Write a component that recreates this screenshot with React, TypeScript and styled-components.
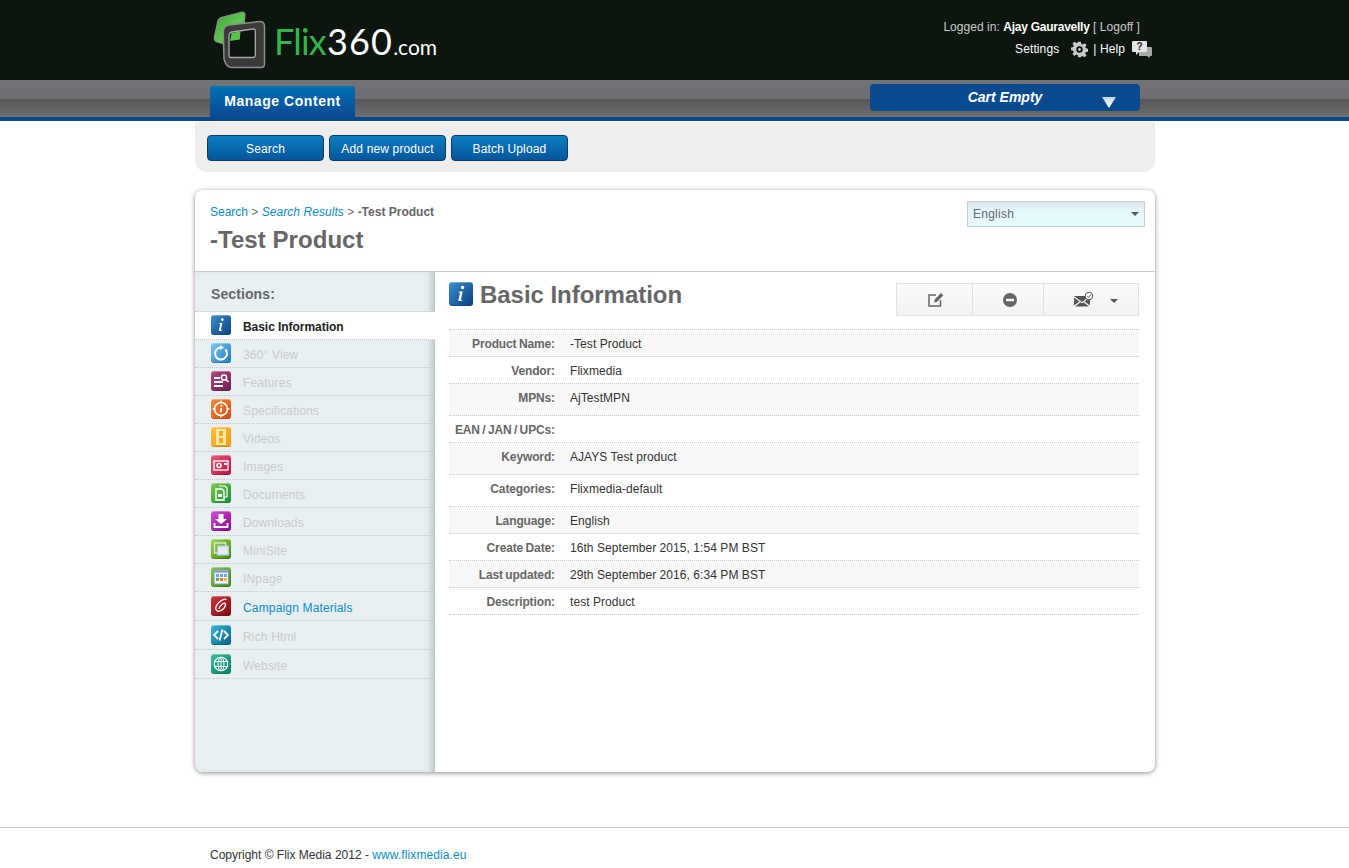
import React from "react";
import styled, { createGlobalStyle } from "styled-components";

const Global = createGlobalStyle`
  html, body { margin: 0; padding: 0; background: #fff; }
  body { font: 12px/14px "Liberation Sans", Arial, sans-serif; color: #333; overflow: hidden; }
  a { text-decoration: none; color: #0a8cc9; }
`;

const Page = styled.div`
  width: 1349px;
  height: 868px;
  overflow: hidden;
`;
const Inner = styled.div`
  width: 960px;
  margin-left: 195px;
`;
const TopBar = styled.header`
  height: 80px;
  background: #0c150e;
`;
const TopInner = styled(Inner)`
  display: flex;
  justify-content: space-between;
  height: 80px;
`;
const Logo = styled.div`
  display: flex;
  align-items: flex-start;
  padding: 11px 0 0 16px;
`;
const LogoText = styled.div`
  margin: 8px 0 0 8px;
  font: 400 36px/44px Lato, "Open Sans", sans-serif;
  color: #fff;
  white-space: nowrap;
`;
const LogoGreen = styled.span`
  color: #35b44a;
  letter-spacing: -0.8px;
`;
const LogoDigits = styled.span`
  letter-spacing: 1.2px;
  margin-left: 1px;
`;
const LogoSmall = styled.span`
  font-size: 21px;
`;
const UserBox = styled.div`
  display: flex;
  flex-direction: column;
  align-items: flex-end;
  padding: 20px 3px 0 0;
  color: #fff;
`;
const Logged = styled.div`
  height: 14px;
  margin-right: 12px;
  color: #ccc;
  letter-spacing: 0.05px;
  b { color: #fff; letter-spacing: -0.25px; }
`;
const UserRow = styled.div`
  display: flex;
  align-items: center;
  height: 20px;
  margin-top: 5px;
  letter-spacing: 0.1px;
`;
const Spacer = styled.span<{ $w: number }>`
  display: inline-block;
  width: ${(p) => p.$w}px;
`;
const NavBar = styled.nav`
  height: 37px;
  background: linear-gradient(#727376 0, #6d6e71 50%, #565656 50%, #6e6e6e 100%);
  border-bottom: 4px solid #0a4a92;
`;
const NavInner = styled(Inner)`
  display: flex;
  justify-content: space-between;
  height: 37px;
  padding: 0 15px;
  box-sizing: border-box;
`;
const Tab = styled.div`
  margin-top: 6px;
  width: 145px;
  height: 31px;
  box-sizing: border-box;
  text-align: center;
  border-radius: 3px 3px 0 0;
  background: linear-gradient(#0070b6, #0a4a92);
  color: #fff;
  font: bold 14px/30px "Liberation Sans", sans-serif;
  letter-spacing: 0.55px;
`;
const Cart = styled.div`
  position: relative;
  margin-top: 4px;
  width: 270px;
  height: 27px;
  background: #0a4a8f;
  border-radius: 4px;
  color: #fff;
  font: italic bold 14px/27px "Liberation Sans", sans-serif;
  text-align: center;
`;
const CartArrow = styled.svg`
  position: absolute;
  left: 232px;
  top: 12px;
`;
const SubNav = styled(Inner)`
  margin-top: 1px;
  height: 50px;
  box-sizing: border-box;
  padding: 13px 12px 0;
  display: flex;
  gap: 5px;
  background: #eee;
  border-radius: 0 0 12px 12px;
`;
const Btn = styled.button`
  width: 117px;
  height: 26px;
  padding: 2px 0 0;
  border: 1px solid #123a5e;
  border-radius: 4px;
  background: linear-gradient(#0a7dc0, #05569c);
  color: #fff;
  font: 12px/14px "Liberation Sans", sans-serif;
  letter-spacing: 0.15px;
`;
const Card = styled(Inner)`
  margin-top: 18px;
  height: 582px;
  background: #fff;
  border-radius: 8px;
  box-shadow: 0 1px 5px rgba(0, 0, 0, 0.45);
  display: flex;
  flex-direction: column;
  overflow: hidden;
`;
const CardHead = styled.div`
  height: 82px;
  box-sizing: border-box;
  flex: none;
  border-bottom: 1px solid #ccc;
  display: flex;
  justify-content: space-between;
  padding: 15px 10px 0 15px;
`;
const Crumbs = styled.div`
  color: #666;
  i { color: #0a8cc9; letter-spacing: 0.06px; }
  b { color: #666; }
`;
const Title = styled.h1`
  margin: 7px 0 0;
  font: bold 24px/28px "Liberation Sans", sans-serif;
  letter-spacing: 0.05px;
  color: #666;
`;
const LangSelect = styled.div`
  position: relative;
  margin-top: -4px;
  width: 178px;
  height: 26px;
  box-sizing: border-box;
  border: 1px solid #c3cfd0;
  background: linear-gradient(#d8e6e8 0, #e4f7fb 35%, #e6f9fd 100%);
  padding-left: 5px;
  color: #667;
  letter-spacing: 0.25px;
  line-height: 24px;
`;
const Caret = styled.span`
  position: absolute;
  border-left: 4px solid transparent;
  border-right: 4px solid transparent;
  border-top: 4px solid #555;
  right: 5px;
  top: 10px;
`;
const CardBody = styled.div`
  flex: 1;
  display: flex;
  min-height: 0;
`;
const Side = styled.aside`
  width: 240px;
  flex: none;
  background: #e8eff1;
  box-shadow: inset -7px 0 6px -4px rgba(90, 100, 105, 0.35);
  padding-top: 14px;
`;
const SideTitle = styled.div`
  padding-left: 16px;
  height: 25px;
  font: bold 14px/17px "Liberation Sans", sans-serif;
  letter-spacing: 0.1px;
  color: #666;
  border-bottom: 1px dotted #c4c8ca;
`;
const SideRow = styled.div<{ $h: number; $active?: boolean; $link?: boolean }>`
  height: ${(p) => p.$h}px;
  box-sizing: border-box;
  display: flex;
  align-items: center;
  gap: 12px;
  padding: 0 0 1px 16px;
  border-bottom: 1px dotted #c4c8ca;
  background: ${(p) => (p.$active ? "#fff" : "transparent")};
  color: ${(p) => (p.$active ? "#222" : p.$link ? "#0a8cc9" : "#ccc")};
  font-weight: ${(p) => (p.$active ? "bold" : "normal")};
  letter-spacing: ${(p) => (p.$active ? "-0.05px" : "0.16px")};
`;
const SideLabel = styled.span`
  margin-top: 4px;
`;
const IconBox = styled.span<{ $a: string; $b: string; $size?: number }>`
  width: ${(p) => p.$size ?? 20}px;
  height: ${(p) => p.$size ?? 20}px;
  flex: none;
  display: block;
  border-radius: 3px;
  overflow: hidden;
  background: linear-gradient(135deg, ${(p) => p.$a}, ${(p) => p.$b});
  box-shadow: inset 0 1px 0 rgba(255, 255, 255, 0.3), inset 0 -1px 0 rgba(0, 0, 0, 0.15);
  svg { display: block; width: 100%; height: 100%; }
`;
const Main = styled.main`
  flex: 1;
  padding: 10px 16px 0 14px;
  min-width: 0;
`;
const MainHead = styled.div`
  display: flex;
  justify-content: space-between;
  height: 47px;
  border-bottom: 1px dotted #c8c8c8;
`;
const MainTitle = styled.h2`
  margin: 0;
  display: flex;
  gap: 7px;
  font: bold 24px/26px "Liberation Sans", sans-serif;
  letter-spacing: -0.04px;
  color: #666;
`;
const Actions = styled.div`
  margin-top: 1px;
  display: flex;
  height: 33px;
  box-sizing: border-box;
  border: 1px solid #e2e2e2;
  background: linear-gradient(#fbfbfb, #f3f3f3);
`;
const ActionBtn = styled.div<{ $w: number; $last?: boolean }>`
  position: relative;
  width: ${(p) => p.$w}px;
  display: flex;
  align-items: center;
  justify-content: center;
  box-sizing: border-box;
  border-right: ${(p) => (p.$last ? "none" : "1px solid #e2e2e2")};
`;
const ActionCaret = styled(Caret)`
  top: 15px;
  right: 20px;
`;
const Row = styled.div<{ $h: number; $alt?: boolean }>`
  display: flex;
  height: ${(p) => p.$h}px;
  box-sizing: border-box;
  border-bottom: 1px dotted #c8c8c8;
  background: ${(p) => (p.$alt ? "#f8f8f8" : "#fff")};
  padding-top: 7px;
`;
const Label = styled.div`
  width: 106px;
  text-align: right;
  font-weight: bold;
  color: #666;
  letter-spacing: -0.12px;
  word-spacing: -0.8px;
`;
const Value = styled.div`
  margin-left: 15px;
  color: #333;
  letter-spacing: 0.06px;
`;
const Footer = styled.footer`
  margin-top: 55px;
  height: 40px;
  border-top: 1px solid #ccc;
  padding: 20px 0 0 210px;
  line-height: 14px;
  color: #333;
  a { letter-spacing: 0.1px; }
`;

const InfoIcon = ({ size }: { size?: number }) => (
  <IconBox $a="#3a8fd0" $b="#0a3f7f" $size={size}>
    <svg viewBox="0 0 20 20">
      <path d="M11.300 3.200a1.400 1.400 0 1 1 0 2.800 1.400 1.400 0 0 1 0-2.800zM8 8.200l3.400-.4-1.500 7.200h1.200l-.3.9H7.700l1.500-7-1.400-.1z" fill="#fff" />
    </svg>
  </IconBox>
);

const G = ({ children }: { children: React.ReactNode }) => (
  <svg viewBox="0 0 20 20" fill="none" stroke="#fff" strokeWidth="1.5">{children}</svg>
);

const sections: { name: string; h: number; link?: boolean; a: string; b: string; glyph: React.ReactNode }[] = [
  { name: "360° View", h: 28, a: "#7cc8f0", b: "#1c79c2", glyph: <G><path d="M14.500 6.500A6 6 0 1 1 9 4.600" strokeWidth="2" /><path d="M9 2l4 2.600L9 7z" fill="#fff" stroke="none" /></G> },
  { name: "Features", h: 28, a: "#b04a80", b: "#6e1d50", glyph: <G><path d="M3 6h6v2H3zM3 10h9v2H3zM3 14h9v2H3z" fill="#fff" stroke="none" /><circle cx="13" cy="6.500" r="2.600" /><path d="M15 8.500l2.500 2.500" /></G> },
  { name: "Specifications", h: 28, a: "#f58b3a", b: "#d94a12", glyph: <G><circle cx="10" cy="10" r="6.500" /><path d="M10 1.500v3M10 15.500v3M1.500 10h3M15.500 10h3" /><path d="M10.500 6v1.500M10.500 9l-1 4.500" strokeWidth="1.700" /></G> },
  { name: "Videos", h: 28, a: "#ffc03a", b: "#f59a10", glyph: <G><path d="M5 2h10v16H5z" fill="#ffe9a8" stroke="none" /><path d="M8 4h4v5H8zM8 11h4v5H8z" fill="#f8a91c" stroke="none" /></G> },
  { name: "Images", h: 28, a: "#ea5a7a", b: "#b80f3a", glyph: <G><rect x="3" y="6" width="14" height="9" strokeWidth="1.300" /><circle cx="8" cy="10.500" r="2" /><path d="M13 8h3v2h-3z" fill="#fff" stroke="none" /></G> },
  { name: "Documents", h: 28, a: "#84cc4a", b: "#0f8c3a", glyph: <G><path d="M8 3h6l2 2v9h-3" strokeWidth="1.200" /><path d="M5 6h6l2 2v9H5z" strokeWidth="1.400" /><path d="M7 11h4v3H7z" fill="#fff" stroke="none" /></G> },
  { name: "Downloads", h: 28, a: "#d34ed8", b: "#86088c", glyph: <G><path d="M7.500 3h5v5H16l-6 5-6-5h3.500z" fill="#fff" stroke="none" /><path d="M3.500 12v4h13v-4" strokeWidth="1.800" /></G> },
  { name: "MiniSite", h: 28, a: "#9fd84e", b: "#3a8608", glyph: <G><rect x="3.500" y="4" width="11" height="10" strokeWidth="1.400" stroke="#dcebc8" /><rect x="6.500" y="7" width="11" height="9" fill="#e2ecf8" stroke="#b7c8e8" strokeWidth="1.200" /></G> },
  { name: "INpage", h: 28, a: "#8ccb3e", b: "#3a8608", glyph: <svg viewBox="0 0 20 20"><rect x="3" y="3" width="14.500" height="14" fill="#eef3fb" stroke="#8098c8" /><path d="M3.500 3.500h13.500v2H3.500z" fill="#7a94c8" /><path d="M5 7h3v3H5z" fill="#6ea8e0" /><path d="M9 7h3v3H9z" fill="#6ea8e0" /><path d="M13 7h3v3h-3z" fill="#6ea8e0" /><path d="M5 11h3v3H5z" fill="#58a848" /><path d="M9 11h3v3H9z" fill="#e87838" /><path d="M13 11h3v3h-3z" fill="#f0c030" /></svg> },
  { name: "Campaign Materials", h: 29, link: true, a: "#d4343c", b: "#7c0a10", glyph: <G><path d="M15.500 3.500c-3-1.500-9 3-10.500 7-1 3 1 5.500 4 4.500 2.500-1 5-3.500 5.500-6 .3-1.500-1-2.500-2.500-1.500-2 1.500-3.800 3.800-4 5.500" strokeWidth="1.300" /></G> },
  { name: "Rich Html", h: 29, a: "#3ab8e0", b: "#05607f", glyph: <G><path d="M7 6l-4 4 4 4M13 6l4 4-4 4M11.500 4.500l-3 11" strokeWidth="1.800" /></G> },
  { name: "Website", h: 29, a: "#38c0a0", b: "#067c60", glyph: <G><circle cx="10" cy="10" r="6.800" strokeWidth="1.100" /><ellipse cx="10" cy="10" rx="3" ry="6.800" strokeWidth="1" /><path d="M3.500 7.500h13M3.500 12.500h13M10 3v14" strokeWidth="1" /></G> },
];

const rows: { label: string; value?: string; h: number; alt?: boolean }[] = [
  { label: "Product Name:", value: "-Test Product", h: 27, alt: true },
  { label: "Vendor:", value: "Flixmedia", h: 27 },
  { label: "MPNs:", value: "AjTestMPN", h: 32, alt: true },
  { label: "EAN / JAN / UPCs:", h: 27 },
  { label: "Keyword:", value: "AJAYS Test product", h: 32, alt: true },
  { label: "Categories:", value: "Flixmedia-default", h: 32 },
  { label: "Language:", value: "English", h: 27, alt: true },
  { label: "Create Date:", value: "16th September 2015, 1:54 PM BST", h: 27 },
  { label: "Last updated:", value: "29th September 2016, 6:34 PM BST", h: 27, alt: true },
  { label: "Description:", value: "test Product", h: 27 },
];

export default function App() {
  return (
    <Page>
      <Global />
      <TopBar>
        <TopInner>
          <Logo>
            <svg width="55" height="58" viewBox="0 0 55 58">
              <defs>
                <linearGradient id="lg" x1="0" y1="0" x2="1" y2="1">
                  <stop offset="0" stopColor="#3f9e3c" />
                  <stop offset="0.55" stopColor="#5cc94e" />
                  <stop offset="1" stopColor="#2f8f30" />
                </linearGradient>
              </defs>
              <path d="M10 6.500 L31 1.200 Q34 0.800 34 4 L33 14 L16 15 L13 33 L6 31 Q3 30 3.300 26 L7 9.500 Q8 7 10 6.500z" fill="url(#lg)" stroke="#8a8f88" strokeWidth="1.200" />
              <path d="M18 14 L48 10.600 Q53.500 10.300 53.500 15.500 V53 Q53.500 56.500 50 56.500 H21 Q15 56.500 13 48 L12.300 21 Q12.300 15 18 14z" fill="#3a3a3c" stroke="#8c8c8c" strokeWidth="1.500" />
              <path d="M21 21 L42 18 Q44.300 17.800 44.300 20 V44 Q44.300 46.500 42 46.500 H19.500 Q18 46.500 18 44 L18 25 Q18 21.500 21 21z" fill="#0c150e" stroke="#a8a8a8" strokeWidth="1.300" />
              <path d="M20.500 22 L29.500 20.500 L28.800 28.500 L19 30z" fill="#56c24a" />
            </svg>
            <LogoText>
              <LogoGreen>Flix</LogoGreen>
              <LogoDigits>360</LogoDigits>
              <LogoSmall>.com</LogoSmall>
            </LogoText>
          </Logo>
          <UserBox>
            <Logged>
              Logged in: <b>Ajay Gauravelly</b> [ Logoff ]
            </Logged>
            <UserRow>
              Settings
              <Spacer $w={12} />
              <svg width="17" height="17" viewBox="0 0 24 24">
                <path fill="#c9c9c9" fillRule="evenodd" d="M10 1h4l.6 3.100 1.900.8L19.200 3 22 5.800l-1.900 2.700.8 1.900 3.100.6v4l-3.100.6-.8 1.900 1.900 2.700-2.800 2.800-2.700-1.900-1.900.8L14 23h-4l-.6-3.100-1.900-.8L4.800 21 2 18.200l1.900-2.700-.8-1.900L0 13V9l3.100-.6.8-1.900L2 3.800 4.800 1l2.700 1.900 1.900-.8zM12 7.500a4.500 4.500 0 1 0 0 9 4.500 4.500 0 0 0 0-9zm0 2.500a2 2 0 1 1 0 4 2 2 0 0 1 0-4z" />
              </svg>
              <Spacer $w={5} />| Help
              <Spacer $w={7} />
              <svg width="20" height="17" viewBox="0 0 20 17">
                <path d="M7 6h12q1 0 1 1v7q0 1-1 1h-1l-.5 2-2.500-2H7z" fill="#a8a8a8" />
                <path d="M1 0h13q1 0 1 1v9q0 1-1 1H7l-3 3v-3H1q-1 0-1-1V1q0-1 1-1z" fill="#e4e4e4" />
                <text x="7.500" y="9" textAnchor="middle" fontFamily="Liberation Sans" fontWeight="bold" fontSize="10" fill="#222">?</text>
              </svg>
            </UserRow>
          </UserBox>
        </TopInner>
      </TopBar>
      <NavBar>
        <NavInner>
          <Tab>Manage Content</Tab>
          <Cart>
            Cart Empty
            <CartArrow width="14" height="12" viewBox="0 0 14 12">
              <defs>
                <linearGradient id="ca" x1="0" y1="0" x2="0" y2="1">
                  <stop offset="0" stopColor="#c8d4e4" />
                  <stop offset="1" stopColor="#ffffff" />
                </linearGradient>
              </defs>
              <path d="M0 1h14L7 12z" fill="url(#ca)" />
            </CartArrow>
          </Cart>
        </NavInner>
      </NavBar>
      <SubNav>
        <Btn>Search</Btn>
        <Btn>Add new product</Btn>
        <Btn>Batch Upload</Btn>
      </SubNav>
      <Card>
        <CardHead>
          <div>
            <Crumbs>
              <a>Search</a> &gt; <a><i>Search Results</i></a> &gt; <b>-Test Product</b>
            </Crumbs>
            <Title>-Test Product</Title>
          </div>
          <LangSelect>
            English
            <Caret />
          </LangSelect>
        </CardHead>
        <CardBody>
          <Side>
            <SideTitle>Sections:</SideTitle>
            <SideRow $h={28} $active>
              <InfoIcon />
              <SideLabel>Basic Information</SideLabel>
            </SideRow>
            {sections.map((s) => (
              <SideRow key={s.name} $h={s.h} $link={s.link}>
                <IconBox $a={s.a} $b={s.b}>{s.glyph}</IconBox>
                <SideLabel>{s.name}</SideLabel>
              </SideRow>
            ))}
          </Side>
          <Main>
            <MainHead>
              <MainTitle>
                <InfoIcon size={24} />
                Basic Information
              </MainTitle>
              <Actions>
                <ActionBtn $w={76}>
                  <svg width="16" height="15" viewBox="0 0 16 15" style={{ marginLeft: 2 }}>
                    <path d="M12.500 8v6H1V3h7" fill="none" stroke="#666" strokeWidth="1.500" />
                    <path d="M6 10.500l.7-3L13 1l2.300 2.300-6.300 6.500z" fill="#666" />
                  </svg>
                </ActionBtn>
                <ActionBtn $w={71}>
                  <svg width="14" height="14" viewBox="0 0 14 14" style={{ marginLeft: 4 }}>
                    <circle cx="7" cy="7" r="7" fill="#666" />
                    <rect x="3" y="5.800" width="8" height="2.400" fill="#fff" />
                  </svg>
                </ActionBtn>
                <ActionBtn $w={94} $last>
                  <svg width="20" height="15" viewBox="0 0 20 15" style={{ marginLeft: -15 }}>
                    <path d="M0 4h16l-8 6zM0 5.500v8l5.500-4zM16 5.500v8l-5.500-4zM1 14.500l5.500-4.300L8 11.300l1.500-1.100 5.500 4.300z" fill="#555" />
                    <circle cx="15" cy="4" r="3.800" fill="#fff" stroke="#555" />
                    <path d="M13.200 4l1.400 1.400 2.300-2.800" fill="none" stroke="#555" />
                  </svg>
                  <ActionCaret />
                </ActionBtn>
              </Actions>
            </MainHead>
            {rows.map((r) => (
              <Row key={r.label} $h={r.h} $alt={r.alt}>
                <Label>{r.label}</Label>
                <Value>{r.value}</Value>
              </Row>
            ))}
          </Main>
        </CardBody>
      </Card>
      <Footer>
        Copyright © Flix Media 2012 - <a>www.flixmedia.eu</a>
      </Footer>
    </Page>
  );
}
